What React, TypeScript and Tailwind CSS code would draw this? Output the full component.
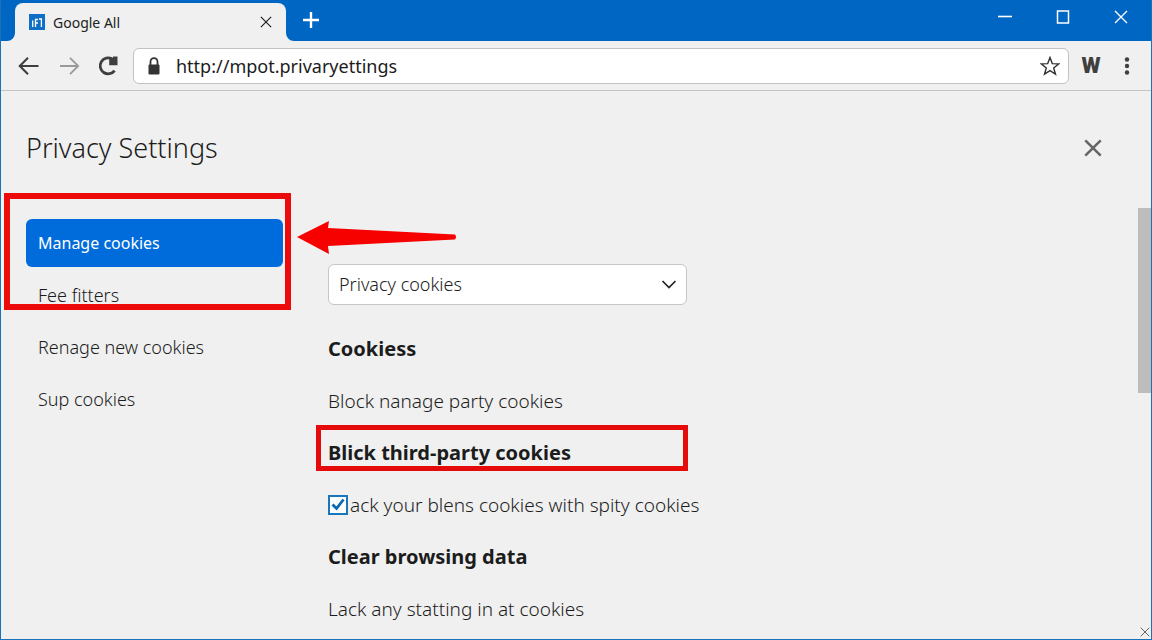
import { useState } from "react";

interface SectionTitleProps {
    children: string;
    highlighted?: boolean;
}

const navItems = ["Manage cookies", "Fee fitters", "Renage new cookies", "Sup cookies"];

function CrossIcon({ className, strokeWidth = 1.4 }: { className: string; strokeWidth?: number }) {
    return (
        <svg className={className} viewBox="0 0 14 14" fill="none" stroke="currentColor" strokeWidth={strokeWidth} aria-hidden="true">
            <path d="M1 1l12 12M13 1L1 13" />
        </svg>
    );
}

function TitleBar() {
    return (
        <header className="flex h-[41px] shrink-0 items-end bg-[#0066c4] text-white">
            <div className="relative ml-3.5 flex h-[38px] w-[271px] items-center rounded-t-lg bg-[#f0f0f0] pr-2.5 pl-3.5 text-[#222]">
                <svg className="absolute bottom-0 -left-2 h-2 w-2" viewBox="0 0 8 8" fill="#f0f0f0" aria-hidden="true">
                    <path d="M8 0A8 8 0 0 1 0 8H8Z" />
                </svg>
                <svg className="absolute -right-2 bottom-0 h-2 w-2" viewBox="0 0 8 8" fill="#f0f0f0" aria-hidden="true">
                    <path d="M0 0A8 8 0 0 0 8 8H0Z" />
                </svg>
                <svg className="h-4 w-4" viewBox="0 0 16 16" aria-hidden="true">
                    <path fill="#0f6fc6" d="M0 0h16v16H0z" />
                    <path fill="none" stroke="#fff" strokeWidth="1.3" d="M3.7 6.5V13M6.5 13V5.5H9M6.5 9H9M10 5h2.4v8" />
                </svg>
                <span className="ml-2 text-[14px]">Google All</span>
                <button aria-label="Close tab" className="ml-auto flex h-5 w-5 items-center justify-center">
                    <CrossIcon className="h-3 w-3" />
                </button>
            </div>
            <button aria-label="New tab" className="mb-3 ml-4 flex h-[18px] w-[18px] items-center justify-center">
                <svg className="h-4 w-4" viewBox="0 0 16 16" stroke="currentColor" strokeWidth="2.4" aria-hidden="true">
                    <path d="M8 0v16M0 8h16" />
                </svg>
            </button>
            <div className="mr-[23px] ml-auto flex items-center gap-11 self-start pt-2.5">
                <button aria-label="Minimize" className="flex h-3.5 w-3.5 items-center">
                    <svg className="h-3.5 w-3.5" viewBox="0 0 14 14" stroke="currentColor" strokeWidth="1.6" aria-hidden="true">
                        <path d="M0 6.5h14" />
                    </svg>
                </button>
                <button aria-label="Maximize" className="flex h-3.5 w-3.5 items-center">
                    <svg className="h-3.5 w-3.5" viewBox="0 0 14 14" fill="none" stroke="currentColor" strokeWidth="1.5" aria-hidden="true">
                        <path d="M1.5 1h11v12h-11z" />
                    </svg>
                </button>
                <button aria-label="Close" className="flex h-3.5 w-3.5 items-center">
                    <CrossIcon className="h-3.5 w-3.5" />
                </button>
            </div>
        </header>
    );
}

function Toolbar() {
    return (
        <div className="flex h-[50px] shrink-0 items-center border-b border-[#c4c4c4] pr-3 pl-4 text-[#3f3f3f]">
            <button aria-label="Back" className="h-6 w-6">
                <svg className="h-6 w-6" viewBox="0 0 24 24" fill="none" stroke="currentColor" strokeWidth="2.1" aria-hidden="true">
                    <path d="M21.5 12H3M11 3.8L2.8 12l8.2 8.2" />
                </svg>
            </button>
            <button aria-label="Forward" className="ml-4 h-6 w-6 text-[#9a9a9a]">
                <svg className="h-6 w-6" viewBox="0 0 24 24" fill="none" stroke="currentColor" strokeWidth="1.8" aria-hidden="true">
                    <path d="M3 12h18.5M13 3.8l8.2 8.2-8.2 8.2" />
                </svg>
            </button>
            <button aria-label="Reload" className="ml-4 h-6 w-6">
                <svg className="h-6 w-6" viewBox="0 0 24 24" fill="none" stroke="currentColor" strokeWidth="2.8" aria-hidden="true">
                    <path d="M17.6 16.6A8 8 0 1 1 15 4.800" />
                    <path fill="currentColor" stroke="none" d="M12.200 3.800H16V2.600h4.500v8.600h-8.300z" />
                </svg>
            </button>
            <div className="ml-3 flex h-9 flex-1 items-center rounded-md border border-[#c2c2c2] bg-white pr-2 pl-3">
                <svg className="h-[18px] w-4" viewBox="0 0 16 18" aria-hidden="true">
                    <path fill="none" stroke="#333" strokeWidth="1.8" d="M4.500 8V4.800a3.500 3.700 0 0 1 7 0V8" />
                    <rect x="2.5" y="7.5" width="11" height="10" rx="1" fill="#333" />
                </svg>
                <input
                    aria-label="Address"
                    type="text"
                    defaultValue="http://mpot.privaryettings"
                    className="ml-3.5 min-w-0 flex-1 bg-transparent pt-0.5 text-[18px] text-[#1c1c1c] outline-none"
                />
                <button aria-label="Bookmark this page" className="h-5 w-5">
                    <svg className="h-5 w-5" viewBox="0 0 20 20" fill="none" stroke="#333" strokeWidth="1.4" aria-hidden="true">
                        <path d="M10 1.5l2.3 6.1 6.5.3-5.1 4 1.8 6.3L10 14.6l-5.500 3.600 1.800-6.300-5.100-4 6.500-.3z" />
                    </svg>
                </button>
            </div>
            <button className="ml-3 w-5 text-center font-['Roboto',sans-serif] text-[22px] font-black">W</button>
            <button aria-label="Menu" className="ml-3.5 h-6 w-6">
                <svg className="h-6 w-6" viewBox="0 0 24 24" fill="currentColor" aria-hidden="true">
                    <circle cx="12" cy="5.5" r="2.2" />
                    <circle cx="12" cy="12" r="2.2" />
                    <circle cx="12" cy="18.5" r="2.2" />
                </svg>
            </button>
        </div>
    );
}

function Sidebar() {
    const [active, setActive] = useState(navItems[0]);

    return (
        <nav className="relative w-[257px] shrink-0">
            <ul className="flex flex-col gap-1">
                {navItems.map((item) => (
                    <li key={item}>
                        <button
                            onClick={() => setActive(item)}
                            className={`h-12 w-full rounded-md px-3 text-left ${item === active ? "bg-[#006cdc] text-[16px] text-white" : "text-[18px] font-light text-[#1c1c1c]"}`}
                        >
                            {item}
                        </button>
                    </li>
                ))}
            </ul>
            <div className="pointer-events-none absolute -top-[26px] -right-2 -left-[22px] h-[117px] border-6 border-[#ec0a0a]" />
            <svg className="pointer-events-none absolute top-0 left-full ml-3.5 h-9 w-40" viewBox="0 0 160 36" fill="#f60000" aria-hidden="true">
                <path d="M0 18L32 2l-1 7 127 6.500q2 2.500 0 5L31 27l1 8z" />
            </svg>
        </nav>
    );
}

function SectionTitle({ children, highlighted }: SectionTitleProps) {
    return (
        <h2 className="relative flex h-[52px] items-center text-[20px] font-bold text-[#1c1c1c]">
            {children}
            {highlighted && (
                <span className="pointer-events-none absolute -top-0.5 -left-3 h-[46px] w-[372px] border-5 border-[#e60b0b]" />
            )}
        </h2>
    );
}

function SectionText({ children }: { children: string }) {
    return <p className="flex h-[52px] items-center text-[19px] font-light text-[#1c1c1c]">{children}</p>;
}

export default function App() {
    return (
        <div className="flex min-h-screen flex-col border border-t-0 border-[#1873b8] bg-[#f0f0f0] font-['Noto_Sans','Open_Sans',sans-serif]">
            <TitleBar />
            <Toolbar />
            <div className="flex flex-1">
                <main className="min-w-0 flex-1 pl-[25px]">
                    <div className="flex h-[114px] items-center justify-between pr-9">
                        <h1 className="text-[27px] font-light text-[#1c1c1c]">Privacy Settings</h1>
                        <button aria-label="Close settings" className="text-[#666]">
                            <CrossIcon className="h-[18px] w-[18px]" strokeWidth={2} />
                        </button>
                    </div>
                    <div className="flex gap-[45px] pt-3.5">
                        <Sidebar />
                        <div className="min-w-0 flex-1 pt-[45px]">
                            <div className="relative mb-[18px] w-[359px]">
                                <select
                                    aria-label="Cookie category"
                                    className="h-[41px] w-full appearance-none rounded-md border border-[#c6c6c6] bg-white px-2.5 text-[18px] font-light text-[#1c1c1c]"
                                >
                                    <option>Privacy cookies</option>
                                </select>
                                <svg className="pointer-events-none absolute top-3 right-2.5 h-4 w-4" viewBox="0 0 16 16" fill="none" stroke="#222" strokeWidth="1.7" aria-hidden="true">
                                    <path d="M1.5 5L8 11.5 14.5 5" />
                                </svg>
                            </div>
                            <SectionTitle>Cookiess</SectionTitle>
                            <SectionText>Block nanage party cookies</SectionText>
                            <SectionTitle highlighted>Blick third-party cookies</SectionTitle>
                            <label className="flex h-[52px] items-center gap-0.5 text-[19px] font-light text-[#1c1c1c]">
                                <span className="relative h-5 w-5">
                                    <input type="checkbox" defaultChecked className="peer block h-5 w-5 appearance-none border-2 border-[#1976bd] bg-white" />
                                    <svg className="pointer-events-none absolute inset-0 hidden h-5 w-5 peer-checked:block" viewBox="0 0 20 20" fill="none" stroke="#0b68b4" strokeWidth="2.8" aria-hidden="true">
                                        <path d="M4.500 9.500l4 4L15.500 4.500" />
                                    </svg>
                                </span>
                                ack your blens cookies with spity cookies
                            </label>
                            <SectionTitle>Clear browsing data</SectionTitle>
                            <SectionText>Lack any statting in at cookies</SectionText>
                        </div>
                    </div>
                </main>
                <aside className="flex w-[13px] flex-col items-center justify-between pt-[117px] pb-0.5">
                    <div className="h-[185px] w-full bg-[#bdbdbd]" />
                    <CrossIcon className="h-2.5 w-2.5 text-[#666]" />
                </aside>
            </div>
        </div>
    );
}
